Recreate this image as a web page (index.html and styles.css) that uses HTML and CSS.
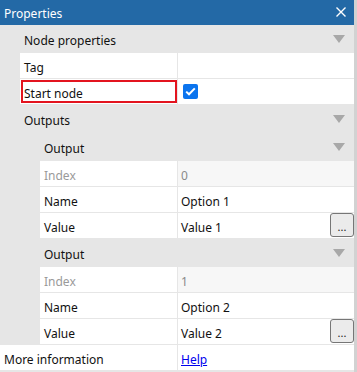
FILE: index.html
```html
<!DOCTYPE html>
<html lang="en">
<head>
    <meta charset="UTF-8">
    <title>Properties</title>
    <link rel="stylesheet" href="styles.css">
</head>
<body>
    <div class="panel">
        <div class="panel-header">
            <span class="panel-title">Properties</span>
            <svg class="close-icon" width="10" height="10" viewBox="0 0 10 10">
                <path d="M0.5 0.5 L9.5 9.5 M9.5 0.5 L0.5 9.5" stroke="#fff" stroke-width="1.4" fill="none"/>
            </svg>
        </div>

        <div class="category">
            <div class="category-title">Node properties<span class="arrow"></span></div>
            <div class="children">
                <div class="row">
                    <div class="label">Tag</div>
                    <div class="value"></div>
                </div>
                <div class="row">
                    <div class="label highlight">Start node</div>
                    <div class="value"><span class="checkbox"><svg width="11" height="9" viewBox="0 0 11 9"><path d="M1.2 4.6 L4 7.3 L9.8 1.4" stroke="#fff" stroke-width="2" fill="none"/></svg></span></div>
                </div>
            </div>
        </div>

        <div class="category">
            <div class="category-title">Outputs<span class="arrow"></span></div>
            <div class="children">
                <div class="category">
                    <div class="category-title">Output<span class="arrow"></span></div>
                    <div class="children">
                        <div class="row readonly">
                            <div class="label">Index</div>
                            <div class="value">0</div>
                        </div>
                        <div class="row">
                            <div class="label">Name</div>
                            <div class="value">Option 1</div>
                        </div>
                        <div class="row">
                            <div class="label">Value</div>
                            <div class="value">Value 1<button type="button" class="dots-button">...</button></div>
                        </div>
                    </div>
                </div>
                <div class="category">
                    <div class="category-title">Output<span class="arrow"></span></div>
                    <div class="children">
                        <div class="row readonly">
                            <div class="label">Index</div>
                            <div class="value">1</div>
                        </div>
                        <div class="row">
                            <div class="label">Name</div>
                            <div class="value">Option 2</div>
                        </div>
                        <div class="row">
                            <div class="label">Value</div>
                            <div class="value">Value 2<button type="button" class="dots-button">...</button></div>
                        </div>
                    </div>
                </div>
            </div>
        </div>

        <div class="row">
            <div class="label">More information</div>
            <div class="value"><a href="#" class="help-link">Help</a></div>
        </div>
    </div>
</body>
</html>
```

FILE: styles.css
```css
body {
    margin: 0;
    background-color: #d2d2d2;
    font-family: "Noto Sans", Arial, sans-serif;
    font-size: 12px;
    color: #111;
}

.panel {
    width: 354px;
    height: 372px;
    background-color: #e6e6e6;
    overflow: hidden;
}

.panel-header {
    height: 25px;
    background-color: #2369a6;
    color: #fff;
    display: flex;
    align-items: center;
    justify-content: space-between;
    padding: 0 8px 0 4px;
}

.panel-title {
    font-size: 12px;
    padding-top: 1px;
}

.close-icon {
    margin-top: -1px;
}

.category-title {
    height: 28px;
    box-sizing: border-box;
    padding: 3px 9px 0 24px;
    display: flex;
    align-items: center;
    justify-content: space-between;
}

.arrow {
    width: 0;
    height: 0;
    margin-top: -3px;
    border-left: 6px solid transparent;
    border-right: 6px solid transparent;
    border-top: 8px solid #a8a8a8;
}

.children {
    margin-left: 20px;
}

.row {
    display: flex;
    height: 25px;
    border-bottom: 1px solid #e6e6e6;
    background-color: #fff;
}

.label {
    flex: 1;
    display: flex;
    align-items: center;
    padding: 4px 0 0 4px;
    border-right: 1px solid #e6e6e6;
}

.value {
    width: 173px;
    display: flex;
    align-items: center;
    padding: 4px 0 0 3px;
}

.highlight {
    outline: 2px solid #e3141f;
    outline-offset: -3px;
}

.readonly .label {
    color: #9a9a9a;
}

.readonly .value {
    color: #8a8a8a;
    background-color: #f7f7f7;
}

.checkbox {
    width: 15px;
    height: 15px;
    margin: -4px 0 0 2px;
    border-radius: 2px;
    background-color: #0b74ee;
    display: flex;
    align-items: center;
    justify-content: center;
}

.dots-button {
    align-self: flex-start;
    margin: -4px 0 0 auto;
    width: 24px;
    height: 24px;
    padding: 0 0 4px;
    border: 1px solid #767676;
    border-radius: 3px;
    background-color: #ebebeb;
    font-family: "Noto Sans", Arial, sans-serif;
    font-size: 11px;
    line-height: 1;
    display: flex;
    align-items: flex-end;
    justify-content: center;
    color: #222;
}

.help-link {
    color: #0000ee;
}
```
